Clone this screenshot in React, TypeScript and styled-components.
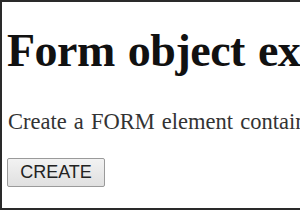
import React from "react";
import styled, { createGlobalStyle } from "styled-components";

const GlobalStyle = createGlobalStyle`
  html, body {
    margin: 0;
    padding: 0;
    background: #ffffff;
  }
`;

const Frame = styled.div`
  box-sizing: border-box;
  width: 300px;
  height: 210px;
  overflow: hidden;
  background: #ffffff;
  border-top: 2px solid #2a2a2a;
  border-left: 2px solid #2a2a2a;
  border-bottom: 2px solid #2a2a2a;
  padding: 0 0 0 5px;
  font-family: "Liberation Serif", "Times New Roman", serif;
  white-space: nowrap;
`;

const Heading = styled.h1`
  margin: 24px 0 0 0;
  font-size: 46px;
  line-height: 50px;
  font-weight: bold;
  letter-spacing: -0.5px;
  word-spacing: 2px;
  color: #111111;
`;

const Intro = styled.p`
  margin: 33px 0 0 1px;
  font-size: 22.5px;
  line-height: 26px;
  word-spacing: 1.5px;
  color: #333333;
`;

const CreateButton = styled.button`
  margin-top: 23px;
  width: 98px;
  height: 29px;
  padding: 0;
  font-family: "Liberation Sans", Arial, sans-serif;
  font-size: 18px;
  color: #222222;
  background: linear-gradient(#f2f2f2, #e0e0e0);
  border: 1px solid #9a9a9a;
  border-radius: 2px;
`;

export default function App() {
  return (
    <>
      <GlobalStyle />
      <Frame>
        <Heading>Form object example</Heading>
        <Intro>Create a FORM element containing a button</Intro>
        <CreateButton type="button">CREATE</CreateButton>
      </Frame>
    </>
  );
}
